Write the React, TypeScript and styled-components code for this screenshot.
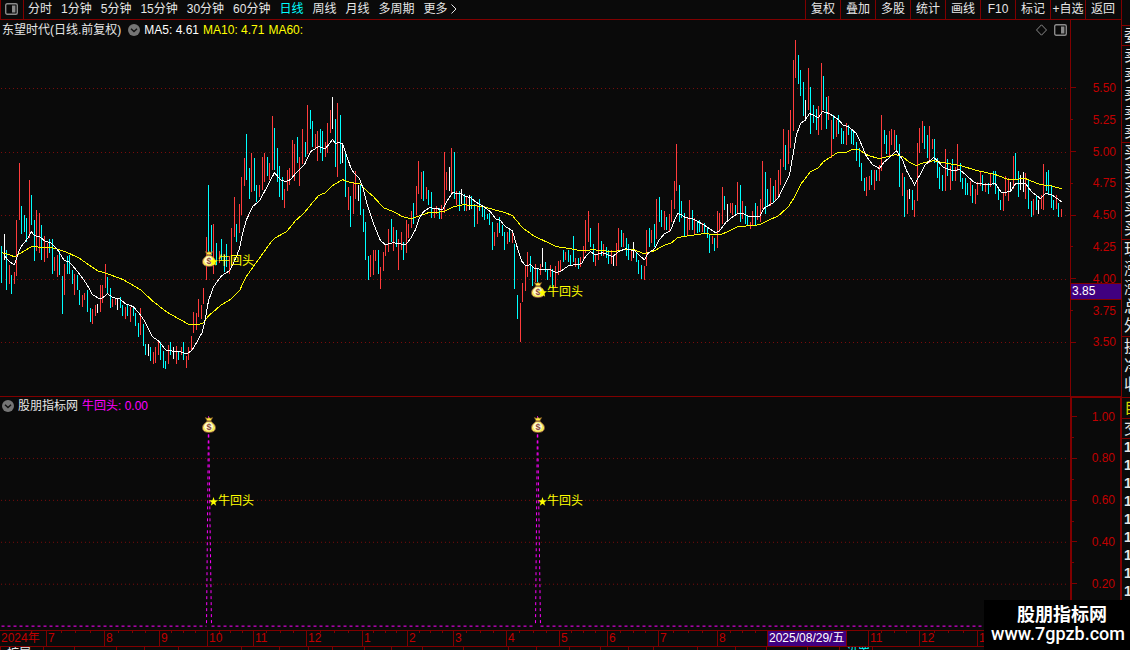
import React from "react";
import styled, { createGlobalStyle } from "styled-components";

const color = {
  bg: "#0a0a0a",
  line: "#800000",
  label: "#c00000",
  up: "#ff3c3c",
  down: "#00ffff",
  flat: "#ffffff",
  yellow: "#ffff00",
  magenta: "#ff00ff",
  text: "#e6e6e6",
  grey: "#8a8a8a",
  tag: "#400080",
};

/* Each bar: direction (r up, c down, w flat) followed by x, high and low. */
const BARS = `
c1,246,283 w4,234,260 c6,250,290 r9,265,284 c11,275,294 r14,272,284 r16,220,276 r19,163,220 c21,206,234 c24,215,232
c26,218,242 r29,180,238 c31,195,225 c34,220,261 r36,210,251 r39,213,253 c41,225,260 r44,236,262 r47,243,258 c49,239,253
c52,239,274 r54,257,271 r57,255,277 c59,251,275 c62,276,314 r64,264,295 c67,256,274 c69,255,274 c72,270,284 r74,274,295
c77,275,290 c79,290,305 r82,295,307 r84,293,300 c87,290,312 c90,308,322 r92,309,324 r95,305,316 w97,304,313 r100,285,312
r102,285,303 r105,264,288 c107,277,294 c110,288,308 r112,299,307 r115,298,305 w117,299,310 c120,297,308 c122,305,316
r125,307,319 c127,304,316 r130,307,322 c133,307,316 c135,313,326 c138,323,337 r140,308,335 c143,324,346 c145,344,355
w148,344,356 c150,347,361 r153,352,364 r155,347,363 r158,341,355 c160,342,360 c163,351,368 c165,361,369 r168,345,364
c170,342,355 w173,347,359 r176,346,364 c178,351,360 r181,347,355 c183,342,360 r186,356,368 r188,347,360 r191,336,351
r193,312,333 r196,313,330 r198,299,317 r201,305,319 r203,288,304 r206,237,280 c208,185,260 c211,225,255 r213,224,274
c216,243,265 r219,251,263 c221,239,260 c224,255,272 c226,244,267 r229,256,274 r231,228,267 r234,197,237 c236,224,242
r239,204,233 r241,177,215 r244,158,186 c246,134,180 c249,168,199 r251,153,192 c254,158,191 c256,185,202 r259,185,197
r262,157,190 r264,153,182 c267,157,176 r269,163,180 r272,116,170 c274,128,170 c277,148,182 c279,166,197 c282,177,200
r284,189,208 r287,170,191 r289,168,185 r292,140,176 r294,144,181 c297,137,163 r299,157,186 r302,129,164 c305,142,157
r307,105,154 c310,110,129 c312,121,147 r315,134,149 r317,131,161 c320,129,153 c322,131,161 r325,142,157 r327,123,153
r330,110,133 w332,97,129 c335,119,167 r337,103,177 c340,115,164 w342,143,163 c345,152,197 r348,187,210 c350,196,227
r353,182,214 r355,171,199 w358,185,201 c360,185,215 c363,209,232 c365,222,260 c368,256,280 r370,255,277 r373,250,275
r375,250,261 c378,250,274 r380,267,289 r383,252,271 r385,244,256 r388,229,252 c391,219,242 r393,227,251 c396,230,247
r398,239,270 r401,232,250 c403,242,260 r406,220,253 r408,224,238 r411,211,228 c413,203,224 r416,186,215 r418,161,194
r421,172,199 c423,171,201 r426,187,199 c428,190,205 c431,192,218 r434,209,218 r436,206,214 c439,208,219 r441,205,219
r444,152,213 r446,172,190 w449,167,191 r451,148,193 c454,152,199 r456,191,205 c459,191,211 w461,189,204 c464,194,211
r466,197,211 w469,195,210 c471,196,209 c474,204,227 r477,205,224 c479,199,211 c482,205,217 c484,209,220 c487,214,219
c489,213,225 c492,222,250 r494,232,246 r497,223,237 c499,217,233 c502,225,236 c504,232,250 r507,232,244 c509,230,242
r512,232,243 c514,244,289 c517,295,319 r520,303,342 r522,283,302 r525,265,291 r527,252,277 c530,256,272 c532,266,286
r535,264,282 c537,268,282 r540,264,275 w542,248,267 c545,262,272 c547,270,280 r550,265,277 c552,269,288 r555,266,288
r558,261,275 r560,260,271 c563,250,262 r565,252,260 c568,250,262 c570,255,266 c573,236,262 r575,258,267 c578,258,269
r580,257,267 r583,246,260 r585,220,253 r588,211,242 c590,228,247 c593,244,262 r595,254,266 r598,223,260 c601,241,256
r603,244,256 c606,247,258 c608,250,264 r611,250,264 w613,257,266 r616,243,266 r618,228,252 c621,230,247 r623,233,247
c626,238,256 c628,244,260 r631,249,261 w633,242,258 c636,253,262 c638,260,274 c641,265,279 r644,266,280 r646,230,266
c649,228,247 r651,230,243 c654,224,247 r656,199,239 c659,197,222 c661,210,227 r664,211,230 c666,217,230 r669,214,231
r671,200,222 r674,181,209 r676,144,191 c679,185,222 c681,201,218 c684,213,237 r687,218,236 r689,200,230 c692,210,230
r694,218,234 c697,222,233 c699,220,232 r702,223,232 c704,223,234 c707,227,238 c709,234,253 r712,236,244 c714,238,251
r717,211,248 r719,213,232 r722,187,224 c724,196,210 w727,204,220 r730,203,213 r732,203,215 c735,205,215 r737,182,213
c740,185,222 r742,201,219 c745,206,224 c747,215,226 r750,222,229 r752,211,225 c755,203,225 r757,206,220 r760,199,222
r762,161,209 c765,172,214 c767,189,206 r770,178,206 c773,186,203 r775,180,201 r778,170,197 r780,159,185 r783,129,167
c785,145,170 r788,130,164 r790,110,148 r793,60,131 r795,40,78 c798,55,84 c800,70,96 c803,82,116 w805,100,121 r808,68,110
c810,87,134 c813,105,123 c816,109,130 r818,106,135 r821,63,130 c823,76,110 c826,97,129 r828,96,120 r831,120,158
c833,115,139 r836,120,137 c838,115,134 c841,128,144 c843,131,144 r846,123,145 c848,125,135 c851,130,144 c853,131,145
c856,142,161 c859,148,167 c861,163,181 c864,178,191 r866,177,196 r869,176,190 c871,170,185 r874,170,190 c876,170,181
r879,165,181 r881,115,171 c884,130,144 c886,135,154 r889,131,156 r891,129,145 r894,130,150 c896,135,152 c899,144,187
r902,173,196 c904,177,217 r907,190,214 w909,189,199 c912,190,210 r914,200,217 r917,143,201 r919,128,153 r922,121,143
c924,126,149 c927,135,158 r929,126,163 r932,139,149 c934,139,163 c937,158,178 c939,167,189 c942,175,191 r945,149,191
c947,159,176 r950,166,190 c952,159,181 r955,167,181 r957,144,171 c960,163,182 c962,178,189 c965,178,195 c967,183,195
r970,181,196 c972,185,203 r975,189,204 r977,182,195 r980,172,186 c982,175,191 r985,183,192 c988,183,194 r990,173,187
c993,171,185 c995,171,194 c998,187,200 c1000,200,210 r1003,192,211 r1005,176,196 r1008,178,201 w1010,182,192 r1013,156,189
c1015,153,180 c1018,171,197 w1020,175,190 w1023,172,192 r1025,173,199 c1028,180,209 c1031,201,217 r1033,199,215
c1036,195,210 w1038,200,214 r1041,195,209 r1043,164,210 c1046,172,191 c1048,170,194 c1051,185,208 c1053,200,210
r1056,195,209 c1058,203,217 r1061,209,217`
  .trim()
  .split(/\s+/)
  .map((s) => {
    const [x, high, low] = s.slice(1).split(",").map(Number);
    return { dir: s[0], x, high, low };
  });

const MA_SHORT =
  "4,255 9,261 14,264 16,258 19,249 22,244 27,238 31,231 34,235 39,236 44,240 50,242 57,249 64,260 68,261 73,266 78,272 86,283 92,294 99,298 102,297 107,293 113,297 119,298 125,303 133,306 139,313 144,320 152,336 158,340 165,349 170,350 180,351 186,353 191,350 196,342 202,331 205,317 208,300 213,286 221,275 229,270 234,260 239,248 242,233 246,219 252,206 259,200 265,189 274,172 280,179 285,181 290,179 295,173 304,164 310,151 318,146 325,148 332,139 335,143 338,142 342,143 345,152 351,169 355,174 359,178 363,189 367,205 373,223 380,240 385,244 393,242 405,244 410,238 415,229 419,217 423,211 429,207 436,208 442,209 446,201 452,192 460,193 466,196 470,197 475,201 483,206 490,211 495,218 500,220 505,226 512,230 515,241 521,260 525,265 530,264 534,268 550,269 556,272 561,270 568,265 581,263 585,256 590,251 595,254 602,252 612,256 618,251 625,248 634,250 639,255 644,259 647,253 654,248 658,240 664,233 670,230 673,222 677,213 681,214 685,217 692,218 703,224 715,232 719,230 725,222 731,217 737,213 743,213 749,216 759,216 763,208 773,202 778,197 784,184 789,174 792,157 796,134 800,123 805,119 809,113 818,117 822,111 829,113 838,119 843,125 848,126 856,133 861,144 866,156 872,164 879,168 883,162 889,157 896,150 902,159 906,170 914,184 919,175 924,165 933,157 937,160 943,167 953,170 959,169 965,174 974,182 985,184 995,183 1001,192 1010,191 1015,183 1025,183 1031,191 1040,198 1045,193 1051,194 1061,201";

const MA_LONG =
  "1,252 6,253 14,256 31,246 52,247 65,251 78,257 97,270 107,273 123,279 140,289 153,301 166,311 180,319 189,324 202,323 208,315 221,304 231,298 239,290 245,277 252,267 260,256 270,242 275,237 286,231 295,220 303,213 312,202 318,195 325,192 332,185 342,179 350,182 359,183 366,190 373,196 383,207 393,211 402,216 410,218 417,216 428,212 443,211 453,206 463,204 483,206 497,210 505,212 512,215 522,227 533,235 556,246 570,248 580,250 593,249 613,251 623,249 634,249 643,253 654,250 663,245 671,242 677,237 688,235 703,233 720,234 727,231 737,226 750,225 759,224 765,221 778,215 788,206 793,198 800,184 810,171 818,167 823,161 837,152 845,152 851,149 858,149 868,155 879,158 895,154 902,156 908,161 916,165 923,162 933,160 943,162 960,165 977,170 995,174 1008,179 1025,178 1040,184 1050,185 1061,188";

const PLOT_WIDTH = 1070;
const PRICE = { top: 40, height: 356, grid: [88, 152, 215, 279, 342] };
const SIGNAL = { top: 416, height: 214, grid: [458, 500, 542, 584], base: 626 };
const SIGNALS = [208, 537];

const PERIODS = ["分时", "1分钟", "5分钟", "15分钟", "30分钟", "60分钟", "日线", "周线", "月线", "多周期"];
const TOOLS = ["复权", "叠加", "多股", "统计", "画线", "F10", "标记", "+自选", "返回"];
const PRICES = ["5.50", "5.25", "5.00", "4.75", "4.50", "4.25", "4.00", "3.75", "3.50"];
const LEVELS = ["1.00", "", "0.80", "", "0.60", "", "0.40", "", "0.20"];

const MONTHS: { label: string; span: number; kind?: "plain" | "date" }[] = [
  { label: "2024年", span: 46, kind: "plain" },
  { label: "7", span: 58 },
  { label: "8", span: 55 },
  { label: "9", span: 48 },
  { label: "10", span: 46 },
  { label: "11", span: 53 },
  { label: "12", span: 56 },
  { label: "1", span: 45 },
  { label: "2", span: 46 },
  { label: "3", span: 53 },
  { label: "4", span: 53 },
  { label: "5", span: 48 },
  { label: "6", span: 51 },
  { label: "7", span: 59 },
  { label: "8", span: 50 },
  { label: "2025/08/29/五", span: 79, kind: "date" },
  { label: "", span: 22, kind: "plain" },
  { label: "11", span: 51 },
  { label: "12", span: 58 },
  { label: "1", span: 153 },
];

const TABS: { span: number; label?: string; active?: boolean }[] = [
  { span: 43, label: "扩展" },
  ...[31, 42, 28, 34, 63, 38, 29, 24, 32, 27, 31, 41, 45, 28, 33, 31, 28, 25, 44, 38, 31, 41, 32].map((span) => ({ span })),
  { span: 33, label: "设置", active: true },
  { span: 258 },
];

const columns = (items: { span: number }[]) => items.map((m) => `minmax(0, ${m.span}fr)`).join(" ");

const GlobalStyle = createGlobalStyle`
  *, *::before, *::after { box-sizing: border-box; }
  body {
    margin: 0;
    background: ${color.bg};
    color: ${color.text};
    font: 12px/18px "Liberation Sans", "Noto Sans CJK SC", sans-serif;
    overflow: hidden;
  }
  svg { display: block; }
`;

const Page = styled.div`
  position: relative;
  display: flex;
  flex-direction: column;
  height: 100vh;
  overflow: hidden;
`;

const Body = styled.div`
  display: flex;
  flex: 1;
  min-height: 0;
`;

const Workspace = styled.main`
  display: flex;
  flex: 1;
  flex-direction: column;
  min-width: 0;
`;

const Toolbar = styled.nav`
  display: flex;
  justify-content: space-between;
  height: 20px;
  border-bottom: 1px solid ${color.line};
  white-space: nowrap;
`;

const PlainButton = styled.button`
  display: flex;
  align-items: center;
  justify-content: center;
  margin: 0;
  padding: 0;
  border: 0;
  background: none;
  color: inherit;
  font: inherit;
  cursor: pointer;
`;

const LayoutButton = styled(PlainButton)`
  width: 24px;
  padding: 0 2px 2px 0;
  border-left: 1px solid ${color.line};
  border-right: 1px solid ${color.line};
`;

const Periods = styled.div`
  display: flex;
  gap: 9px;
`;

const PeriodGroup = styled.div`
  display: flex;
  gap: 4px;
`;

const Period = styled(PlainButton)<{ $active?: boolean }>`
  gap: 3px;
  padding-bottom: 1px;
  color: ${(p) => (p.$active ? color.down : color.text)};
`;

const Tools = styled.div`
  display: flex;
  padding-right: 1px;
`;

const Tool = styled(PlainButton)`
  width: 35px;
  padding-bottom: 1px;
  border-left: 1px solid ${color.line};
`;

const Panel = styled.section<{ $weight: number }>`
  display: flex;
  flex: ${(p) => p.$weight} 1 0;
  min-height: 0;
`;

const PricePanel = styled(Panel)`
  border-bottom: 1px solid ${color.line};
`;

const Plot = styled.div`
  display: flex;
  flex: 1;
  flex-direction: column;
  min-width: 0;
`;

const PlotHeader = styled.header`
  display: flex;
  align-items: center;
  gap: 4px;
  height: 20px;
  padding: 0 3px 1px 2px;
  white-space: nowrap;
`;

const SignalHeader = styled(PlotHeader)`
  height: 19px;
  padding-bottom: 2px;
`;

const StockName = styled.span`
  padding-right: 3px;
`;

const Legend = styled.span<{ $color: string }>`
  color: ${(p) => p.$color};
`;

const HeaderTools = styled.div`
  display: flex;
  gap: 7px;
  margin-left: auto;
`;

const Canvas = styled.div`
  position: relative;
  flex: 1;
  min-height: 0;
`;

const ChartSvg = styled.svg`
  width: 100%;
  height: 100%;
  shape-rendering: crispEdges;
`;

const Pin = styled.div`
  position: absolute;
  transform: translate(-50%, -50%);
`;

const PinLabel = styled.div`
  position: absolute;
  display: flex;
  align-items: center;
  transform: translateY(-50%);
  color: ${color.yellow};
  white-space: nowrap;
`;

const Axis = styled.div`
  position: relative;
  display: flex;
  flex-direction: column;
  width: 51px;
  padding: 52px 0 38px;
  border-left: 1px solid ${color.line};
  color: ${color.label};
`;

const LevelAxis = styled(Axis)`
  padding: 8px 0 36px;
  border-top: 1px solid ${color.line};
  border-right: 1px solid ${color.line};
  border-left-width: 2px;
`;

const AxisRow = styled.div<{ $major: boolean }>`
  display: flex;
  flex: 1;
  align-items: center;
  justify-content: space-between;
  padding-right: 5px;
  &::before {
    content: "";
    width: ${(p) => (p.$major ? 5 : 2)}px;
    height: 1px;
    background: ${color.line};
  }
`;

const PriceTag = styled.output`
  position: absolute;
  top: 70%;
  left: 0;
  right: 0;
  height: 17px;
  border: solid ${color.line};
  border-width: 1px 0;
  background: ${color.tag};
  color: #fff;
  line-height: 14px;
  padding-left: 1px;
`;

const Side = styled.aside`
  width: 9px;
  padding-top: 25px;
  border-left: 1px solid ${color.line};
  overflow: hidden;
  font-size: 16px;
`;

const SideGroup = styled.div<{ $pad?: number; $tone?: string }>`
  padding: 0 0 ${(p) => p.$pad ?? 0}px 2px;
  border-top: 1px solid ${color.line};
  color: ${(p) => p.$tone ?? color.text};
  line-height: 19px;
`;

const SideRow = styled.div`
  width: 16px;
  height: 19px;
`;

const SideCount = styled.div`
  width: 16px;
  height: 18px;
  font-size: 14px;
  font-weight: 700;
  line-height: 17px;
`;

const TimeAxis = styled.div`
  display: grid;
  grid-template-columns: ${columns(MONTHS)};
  height: 17px;
  border: solid ${color.line};
  border-width: 1px 0;
  color: ${color.label};
  line-height: 15px;
  white-space: nowrap;
`;

const Month = styled.div<{ $date: boolean; $first: boolean }>`
  position: relative;
  padding-left: 1px;
  border-left: ${(p) => (p.$first ? 0 : 1)}px solid ${color.line};
  background: ${(p) => (p.$date ? color.tag : "none")};
  color: ${(p) => (p.$date ? "#fff" : color.label)};
`;

const Ticks = styled.div`
  position: absolute;
  top: 0;
  left: 0;
  right: 0;
  display: flex;
  justify-content: space-evenly;
`;

const Tick = styled.i`
  width: 1px;
  height: 2px;
  background: ${color.line};
`;

const TabStrip = styled.footer`
  display: grid;
  grid-template-columns: ${columns(TABS)};
  height: 3px;
  overflow: hidden;
`;

const Tab = styled.div<{ $active?: boolean }>`
  padding-left: 6px;
  border-left: 1px solid ${color.line};
  color: ${(p) => (p.$active ? color.down : color.text)};
  line-height: 13px;
  white-space: nowrap;
`;

const Watermark = styled.div`
  position: absolute;
  right: 0;
  bottom: 0;
  display: flex;
  flex-direction: column;
  align-items: center;
  width: 146px;
  height: 50px;
  padding: 5px 0 0 10px;
  background: #000;
  color: #fff;
  font: 700 18px/20px Roboto, "Noto Sans CJK SC", sans-serif;
`;

const WatermarkUrl = styled.span`
  padding-right: 8px;
  font-size: 18px;
  font-weight: 500;
  line-height: 17px;
`;

const WindowIcon = () => (
  <svg width="13" height="12" viewBox="0 0 13 12" aria-hidden="true">
    <rect x="0.7" y="0.7" width="11.6" height="10.6" rx="1.5" fill="none" stroke={color.grey} strokeWidth={1.4} />
    <rect x="7" y="2.5" width="3.4" height="7" fill={color.grey} />
  </svg>
);

const DiamondIcon = () => (
  <svg width="11" height="12" viewBox="0 0 11 12" aria-hidden="true">
    <path d="M5.5 0.8 L10.5 6 L5.5 11.2 L0.5 6 Z" fill="none" stroke={color.grey} />
  </svg>
);

const DropIcon = () => (
  <svg width="12" height="12" viewBox="0 0 12 12" aria-hidden="true">
    <circle cx="6" cy="6" r="6" fill="#757575" />
    <path d="M3 4.8 L6 7.6 L9 4.8" fill="none" stroke="#111" strokeWidth="1.4" />
  </svg>
);

const ChevronIcon = () => (
  <svg width="6" height="10" viewBox="0 0 6 10" aria-hidden="true">
    <path d="M0.5 0.5 L5 5 L0.5 9.5" fill="none" stroke={color.text} />
  </svg>
);

const StarIcon = () => (
  <svg width="9" height="9" viewBox="0 0 9 9" aria-hidden="true">
    <path d="M4.5 0 L5.6 3.2 L9 3.3 L6.3 5.4 L7.2 8.8 L4.5 6.8 L1.8 8.8 L2.7 5.4 L0 3.3 L3.4 3.2 Z" fill={color.yellow} />
  </svg>
);

const MoneyBag = () => (
  <svg width="14" height="16" viewBox="0 0 14 16" aria-hidden="true">
    <path d="M3.4 0.6 L5.2 1.3 L7 0.6 L8.8 1.3 L10.6 0.6 L8.8 4 H5.2 Z" fill="#ffe840" stroke="#8a5a28" strokeWidth="0.7" />
    <path d="M5 4.2 H9 C9.6 5.6 13.5 7 13.5 10.6 C13.5 14 11 15.5 7 15.5 C3 15.5 0.5 14 0.5 10.6 C0.5 7 4.4 5.6 5 4.2 Z" fill="#f6ea58" stroke="#8a5040" strokeWidth="0.9" />
    <ellipse cx="6.6" cy="9.6" rx="4.4" ry="4" fill="#fff9cf" />
    <text x="7" y="13.3" textAnchor="middle" fontFamily="Liberation Sans, sans-serif" fontSize="9" fontWeight="700" fill="#8a4a42">
      $
    </text>
  </svg>
);

const Grid = ({ rows }: { rows: number[] }) => (
  <g stroke="#7a0c0c" strokeDasharray="1 3">
    {rows.map((y) => (
      <line key={y} x1={1} x2={1068} y1={y + 0.5} y2={y + 0.5} />
    ))}
  </g>
);

type Area = { top: number; height: number };
const at = (area: Area, x: number, y: number) => ({
  left: `${(x / PLOT_WIDTH) * 100}%`,
  top: `${((y - area.top) / area.height) * 100}%`,
});

const Signal = ({ area, x, bagY, labelY }: { area: Area; x: number; bagY: number; labelY: number }) => (
  <>
    <Pin style={at(area, x + 1, bagY)}>
      <MoneyBag />
    </Pin>
    <PinLabel style={at(area, x + 1, labelY)}>
      <StarIcon />
      牛回头
    </PinLabel>
  </>
);

const barColor: Record<string, string> = { r: color.up, c: color.down, w: color.flat };

const PriceChart = () => (
  <Canvas>
    <ChartSvg viewBox={`0 ${PRICE.top} ${PLOT_WIDTH} ${PRICE.height}`} preserveAspectRatio="none" role="img" aria-label="日线">
      <Grid rows={PRICE.grid} />
      {BARS.map((b) => (
        <rect key={b.x} x={b.x} y={b.high} width={1} height={b.low - b.high} fill={barColor[b.dir]} />
      ))}
      <g fill="none" transform="translate(0.5 0.5)">
        <polyline points={MA_LONG} stroke={color.yellow} />
        <polyline points={MA_SHORT} stroke={color.flat} />
      </g>
    </ChartSvg>
    <Signal area={PRICE} x={208} bagY={259} labelY={261} />
    <Signal area={PRICE} x={537} bagY={290} labelY={292} />
  </Canvas>
);

const SignalChart = () => (
  <Canvas>
    <ChartSvg viewBox={`0 ${SIGNAL.top} ${PLOT_WIDTH} ${SIGNAL.height}`} preserveAspectRatio="none" role="img" aria-label="牛回头">
      <Grid rows={SIGNAL.grid} />
      <g fill="none" stroke={color.magenta} strokeDasharray="3 3" transform="translate(0.5 0.5)">
        <path d={`M1 ${SIGNAL.base} H206 M211 ${SIGNAL.base} H535 M540 ${SIGNAL.base} H1069`} />
        {SIGNALS.map((x) => (
          <path key={x} d={`M${x} 416 L${x - 2} ${SIGNAL.base} M${x} 416 L${x + 3} ${SIGNAL.base}`} />
        ))}
      </g>
    </ChartSvg>
    {SIGNALS.map((x) => (
      <Signal key={x} area={SIGNAL} x={x} bagY={425} labelY={501} />
    ))}
  </Canvas>
);

const SideQuotes = () => (
  <Side>
    <SideGroup><SideRow>委</SideRow></SideGroup>
    <SideGroup $pad={1}>{[5, 4, 3, 2, 1].map((n) => <SideRow key={n}>卖</SideRow>)}</SideGroup>
    <SideGroup $pad={1}>{[1, 2, 3, 4, 5].map((n) => <SideRow key={n}>买</SideRow>)}</SideGroup>
    <SideGroup $pad={1}>{["现", "涨", "涨", "总", "外"].map((t, i) => <SideRow key={i}>{t}</SideRow>)}</SideGroup>
    <SideGroup $pad={3}>{["换", "净", "收"].map((t) => <SideRow key={t}>{t}</SideRow>)}</SideGroup>
    <SideGroup $pad={1} $tone="#d8d800"><SideRow>自</SideRow></SideGroup>
    <SideGroup><SideRow>交</SideRow></SideGroup>
    <SideGroup>{Array.from({ length: 9 }, (_, i) => <SideCount key={i}>1</SideCount>)}</SideGroup>
  </Side>
);

export default function App() {
  return (
    <Page>
      <GlobalStyle />
      <Body>
        <Workspace>
          <Toolbar>
            <PeriodGroup>
              <LayoutButton aria-label="布局"><WindowIcon /></LayoutButton>
              <Periods>
                {PERIODS.map((p) => (
                  <Period key={p} $active={p === "日线"}>{p}</Period>
                ))}
                <Period>更多<ChevronIcon /></Period>
              </Periods>
            </PeriodGroup>
            <Tools>
              {TOOLS.map((t) => <Tool key={t}>{t}</Tool>)}
            </Tools>
          </Toolbar>

          <PricePanel $weight={377}>
            <Plot>
              <PlotHeader>
                <StockName>东望时代(日线.前复权)</StockName>
                <PlainButton aria-label="指标菜单"><DropIcon /></PlainButton>
                <Legend $color="#ffffff">MA5: 4.61</Legend>
                <Legend $color={color.yellow}>MA10: 4.71</Legend>
                <Legend $color={color.yellow}>MA60:</Legend>
                <HeaderTools>
                  <PlainButton aria-label="标注"><DiamondIcon /></PlainButton>
                  <PlainButton aria-label="侧栏"><WindowIcon /></PlainButton>
                </HeaderTools>
              </PlotHeader>
              <PriceChart />
            </Plot>
            <Axis>
              {PRICES.map((p, i) => (
                <AxisRow key={p} $major={i % 2 === 0}>{p}</AxisRow>
              ))}
              <PriceTag>3.85</PriceTag>
            </Axis>
          </PricePanel>

          <Panel $weight={233}>
            <Plot>
              <SignalHeader>
                <PlainButton aria-label="指标菜单"><DropIcon /></PlainButton>
                <span>股朋指标网</span>
                <Legend $color={color.magenta}>牛回头: 0.00</Legend>
              </SignalHeader>
              <SignalChart />
            </Plot>
            <LevelAxis>
              {LEVELS.map((l, i) => (
                <AxisRow key={i} $major={l !== ""}>{l}</AxisRow>
              ))}
            </LevelAxis>
          </Panel>
        </Workspace>
        <SideQuotes />
      </Body>

      <TimeAxis>
        {MONTHS.map((m, i) => (
          <Month key={i} $date={m.kind === "date"} $first={i === 0}>
            {m.label}
            {!m.kind && <Ticks><Tick /><Tick /><Tick /></Ticks>}
          </Month>
        ))}
      </TimeAxis>
      <TabStrip>
        {TABS.map((t, i) => <Tab key={i} $active={t.active}>{t.label}</Tab>)}
      </TabStrip>

      <Watermark>
        股朋指标网
        <WatermarkUrl>www.7gpzb.com</WatermarkUrl>
      </Watermark>
    </Page>
  );
}
